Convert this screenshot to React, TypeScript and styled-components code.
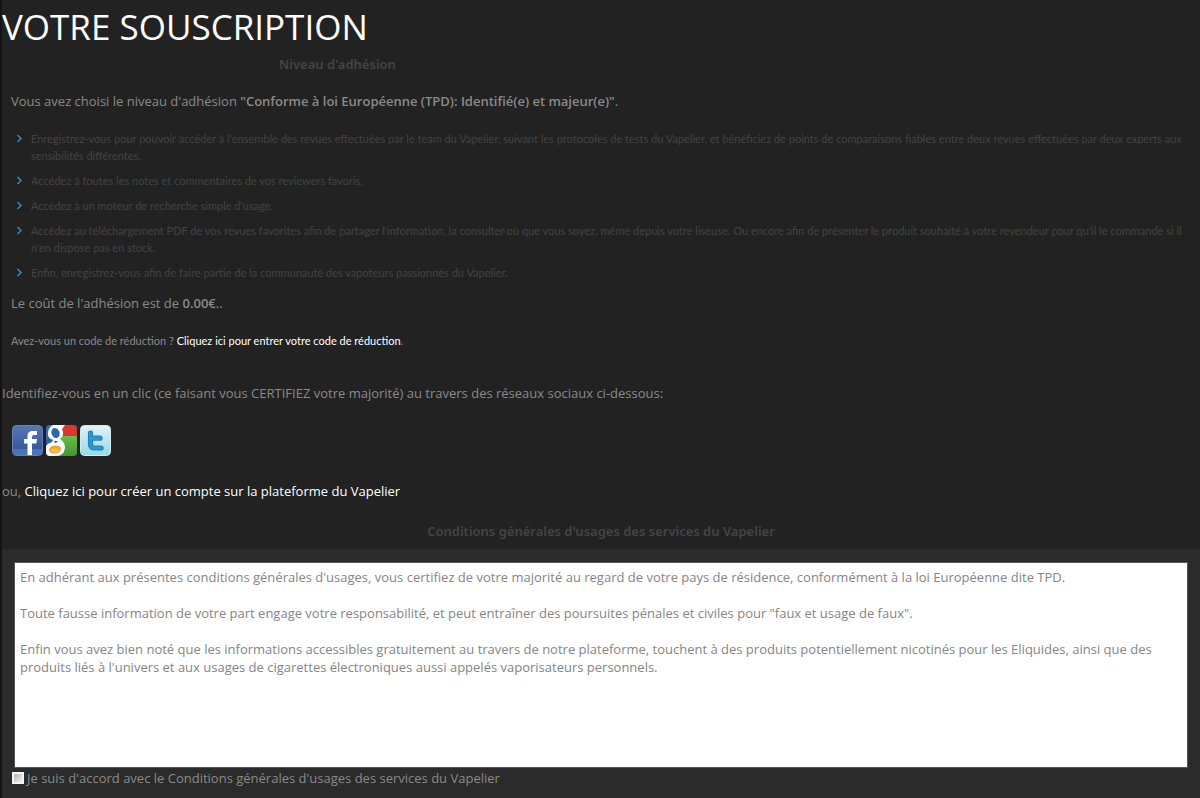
import React from 'react';
import styled, { createGlobalStyle } from 'styled-components';

const bodyFont = '"Open Sans", "Noto Sans", sans-serif';
const smallFont = 'Lato, "Open Sans", sans-serif';

const GlobalStyle = createGlobalStyle`
  *, *::before, *::after { box-sizing: border-box; }
  html { background: #222; }
  body {
    margin: 0;
    background: #222;
    color: #8a8a8a;
    font: 13px/18px ${bodyFont};
  }
  b { font-weight: 600; }
`;

const Page = styled.main`
  display: flex;
  flex-direction: column;
  min-height: 100vh;
  border-left: 2px solid #141414;
`;

const Title = styled.h1`
  margin: 0;
  padding-top: 2px;
  color: #fff;
  font-size: 35px;
  font-weight: 400;
  line-height: 50px;
`;

const SectionTitle = styled.h2<{ $narrow?: boolean }>`
  width: ${(p) => (p.$narrow ? '56%' : '100%')};
  margin: 0;
  padding: ${(p) => (p.$narrow ? '3px 0 5px' : '22px 0 9px')};
  color: #444;
  font-family: "Noto Sans", sans-serif;
  font-size: 13px;
  font-weight: 600;
  line-height: 18px;
  text-align: center;
`;

const Level = styled.section`
  padding: 0 10px 0 9px;
`;

const Paragraph = styled.p<{ $before: number }>`
  margin: ${(p) => p.$before}px 0 0;
`;

const Benefits = styled.ul`
  display: flex;
  flex-direction: column;
  gap: 8px;
  margin: 20px 0 0;
  padding: 0;
  list-style: none;
`;

const Benefit = styled.li`
  display: flex;
  gap: 8px;
  padding-left: 5px;
  color: #424242;
  font: 400 11px/17px ${smallFont};
`;

const Chevron = styled.svg`
  flex: none;
  width: 7px;
  height: 17px;
  fill: none;
  stroke: #2f8fd0;
  stroke-width: 1.4;
`;

const Discount = styled.p`
  margin: 20px 0 0;
  font: 11px/18px ${smallFont};
`;

const Link = styled.a`
  color: #fff;
  text-decoration: none;
`;

const Networks = styled.div`
  display: flex;
  gap: 3px;
  padding: 23px 0 26px 10px;
`;

const NetworkButton = styled.button`
  width: 31px;
  height: 31px;
  padding: 0;
  border: 0;
  background: none;
  cursor: pointer;

  svg { display: block; }
`;

const Terms = styled.section`
  display: flex;
  flex: 1;
  flex-direction: column;
  padding: 12px 12px 9px;
  border-top: 1px solid #292929;
  background: #2b2b2b;
`;

const TermsText = styled.textarea`
  display: block;
  width: 100%;
  height: 206px;
  padding: 5px;
  border: 1px solid #555;
  border-radius: 0;
  outline: 0;
  resize: none;
  background: #fff;
  color: #858585;
  font: 13px/18px ${bodyFont};
`;

const Agreement = styled.label`
  display: flex;
  align-items: center;
  gap: 3px;
  margin-left: -2px;
  padding-top: 1px;
`;

const Checkbox = styled.input`
  appearance: none;
  width: 12px;
  height: 12px;
  margin: 0;
  border: 2px solid #f4f4f4;
  background: linear-gradient(135deg, #b4b4b4, #eee);
`;

const benefits = [
  "Enregistrez-vous pour pouvoir accéder à l'ensemble des revues effectuées par le team du Vapelier, suivant les protocoles de tests du Vapelier, et bénéficiez de points de comparaisons fiables entre deux revues effectuées par deux experts aux sensibilités différentes.",
  'Accédez à toutes les notes et commentaires de vos reviewers favoris.',
  "Accédez à un moteur de recherche simple d'usage.",
  "Accédez au téléchargement PDF de vos revues favorites afin de partager l'information, la consulter où que vous soyez, même depuis votre liseuse. Ou encore afin de présenter le produit souhaité à votre revendeur pour qu'il le commande si il n'en dispose pas en stock.",
  'Enfin, enregistrez-vous afin de faire partie de la communauté des vapoteurs passionnés du Vapelier.',
];

const termsText = `En adhérant aux présentes conditions générales d'usages, vous certifiez de votre majorité au regard de votre pays de résidence, conformément à la loi Européenne dite TPD.

Toute fausse information de votre part engage votre responsabilité, et peut entraîner des poursuites pénales et civiles pour "faux et usage de faux".

Enfin vous avez bien noté que les informations accessibles gratuitement au travers de notre plateforme, touchent à des produits potentiellement nicotinés pour les Eliquides, ainsi que des produits liés à l'univers et aux usages de cigarettes électroniques aussi appelés vaporisateurs personnels.`;

const FacebookIcon = () => (
  <svg width="31" height="31" viewBox="0 0 31 31" aria-hidden="true">
    <defs>
      <linearGradient id="fb" x1="0" y1="0" x2="0" y2="1">
        <stop offset="0" stopColor="#5877b4" />
        <stop offset="1" stopColor="#2d4f96" />
      </linearGradient>
    </defs>
    <rect x="0.5" y="0.5" width="30" height="30" rx="4" fill="url(#fb)" stroke="#6581b8" />
    <path d="M1 24H30V27Q30 30 27 30H4Q1 30 1 27Z" fill="#4a74b8" />
    <path d="M15.500 30V18.500H12V14h3.500v-2.500C15.500 7.500 17.500 6 21 6h4v4h-2.500c-1.800 0-2.500.6-2.500 2.200V14h5l-.6 4.500H20V30Z" fill="#fff" />
  </svg>
);

const GoogleIcon = () => (
  <svg width="31" height="31" viewBox="0 0 31 31" aria-hidden="true">
    <defs>
      <clipPath id="tile"><rect width="31" height="31" rx="4" /></clipPath>
      <linearGradient id="green" x1="0" y1="0" x2="0" y2="1">
        <stop offset="0" stopColor="#6dbb4b" />
        <stop offset="1" stopColor="#3f9633" />
      </linearGradient>
    </defs>
    <g clipPath="url(#tile)">
      <rect width="31" height="31" fill="#2f6fba" />
      <path d="M13 0H31V11H13Z" fill="#d8392f" />
      <path d="M13 11H31V31H11Z" fill="url(#green)" />
      <path d="M0 13L7 15L4 19L0 21Z" fill="#2a62ab" />
      <path d="M7 0H19L16 4Q19 10 14 14Q19 17 19 23Q18 31 10 31H0V21Q2 18 6 17L7 15Q1 13 2 7Q3 2 7 0Z" fill="#fff" />
      <ellipse cx="9.500" cy="8" rx="4" ry="5.200" transform="rotate(-22 9.500 8)" fill="#2c66ae" />
      <path d="M8 16q2-1 4 1l-3 1Z" fill="#2c66ae" />
      <ellipse cx="9" cy="24.500" rx="6" ry="4" transform="rotate(-8 9 24.500)" fill="#f3a02c" />
      <ellipse cx="9" cy="25.500" rx="4" ry="2" fill="#f8bd4c" />
    </g>
  </svg>
);

const TwitterIcon = () => (
  <svg width="31" height="31" viewBox="0 0 31 31" aria-hidden="true">
    <defs>
      <linearGradient id="tw" x1="0" y1="0" x2="0" y2="1">
        <stop offset="0" stopColor="#e0f4f8" />
        <stop offset="1" stopColor="#98d8ea" />
      </linearGradient>
    </defs>
    <rect x="0.5" y="0.5" width="30" height="30" rx="4" fill="url(#tw)" stroke="#cfecf3" />
    <path d="M10.500 8v10.500c0 3.500 1.500 4.500 4.500 4.500h6M10.500 13.200H20" fill="none" stroke="#1f7fb5" strokeWidth="5.200" strokeLinecap="round" />
    <path d="M10.500 8v10.500c0 3.500 1.500 4.500 4.500 4.500h6M10.500 13.200H20" fill="none" stroke="#2f98cb" strokeWidth="3.200" strokeLinecap="round" />
  </svg>
);

export default function App() {
  return (
    <>
      <GlobalStyle />
      <Page>
        <Title>VOTRE SOUSCRIPTION</Title>
        <SectionTitle $narrow>Niveau d'adhésion</SectionTitle>
        <Level>
          <Paragraph $before={14}>
            Vous avez choisi le niveau d'adhésion <b>"Conforme à loi Européenne (TPD): Identifié(e) et majeur(e)"</b>.
          </Paragraph>
          <Benefits>
            {benefits.map((text) => (
              <Benefit key={text}>
                <Chevron viewBox="0 0 7 17" aria-hidden="true">
                  <path d="M1.500 5l3.500 3.500L1.500 12" />
                </Chevron>
                <span>{text}</span>
              </Benefit>
            ))}
          </Benefits>
          <Paragraph $before={13}>
            Le coût de l'adhésion est de <b>0.00€</b>..
          </Paragraph>
          <Discount>
            Avez-vous un code de réduction ? <Link href="#code">Cliquez ici pour entrer votre code de réduction</Link>.
          </Discount>
        </Level>
        <Paragraph $before={34}>
          Identifiez-vous en un clic (ce faisant vous CERTIFIEZ votre majorité) au travers des réseaux sociaux ci-dessous:
        </Paragraph>
        <Networks>
          <NetworkButton type="button" aria-label="Facebook"><FacebookIcon /></NetworkButton>
          <NetworkButton type="button" aria-label="Google"><GoogleIcon /></NetworkButton>
          <NetworkButton type="button" aria-label="Twitter"><TwitterIcon /></NetworkButton>
        </Networks>
        <Paragraph $before={0}>
          ou, <Link href="#compte">Cliquez ici pour créer un compte sur la plateforme du Vapelier</Link>
        </Paragraph>
        <SectionTitle id="conditions">Conditions générales d'usages des services du Vapelier</SectionTitle>
        <Terms>
          <TermsText readOnly aria-labelledby="conditions" defaultValue={termsText} />
          <Agreement>
            <Checkbox type="checkbox" />
            Je suis d'accord avec le Conditions générales d'usages des services du Vapelier
          </Agreement>
        </Terms>
      </Page>
    </>
  );
}
